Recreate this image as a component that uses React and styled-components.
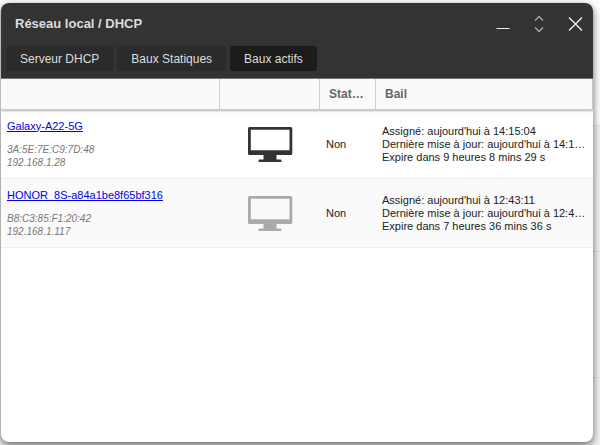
import React, { useState } from "react";
import styled, { createGlobalStyle } from "styled-components";

const GlobalStyle = createGlobalStyle`
    * {
        box-sizing: border-box;
    }

    body {
        margin: 0;
        font-family: "Liberation Sans", Arial, sans-serif;
        background: linear-gradient(#ffffff 125px, #f3f3f3 125px);
    }
`;

const Desktop = styled.div`
    display: flex;
    min-height: 100vh;
    padding: 3px 7px 3px 1px;
    background: repeating-linear-gradient(transparent 0 125px, #e2e2e2 125px 126px);
`;

const Window = styled.main`
    flex: 1;
    min-width: 0;
    overflow: hidden;
    border-radius: 8px;
    background: #ffffff;
    box-shadow: 0 3px 8px rgba(0, 0, 0, 0.6);
`;

const Header = styled.header`
    height: 76px;
    background: #333333;
    border-bottom: 1px solid #777777;
`;

const TitleBar = styled.div`
    display: flex;
    align-items: center;
    justify-content: space-between;
    height: 43px;
    padding: 0 8px 2px 14px;
`;

const Title = styled.h1`
    margin: 0;
    color: #dddddd;
    font-size: 13px;
    font-weight: bold;
`;

const Controls = styled.div`
    display: flex;
    gap: 16px;
`;

const ControlButton = styled.button`
    display: flex;
    padding: 0;
    border: 0;
    background: none;
    color: ${props => props.$muted ? "#aaaaaa" : "#eeeeee"};
`;

const Tabs = styled.nav`
    display: flex;
    gap: 4px;
    padding: 0 5px;
`;

const Tab = styled.button`
    height: 25px;
    padding: 0 14px;
    border: 0;
    border-radius: 3px;
    background: ${props => props.$active ? "#1c1c1c" : "#2b2b2b"};
    color: #dddddd;
    font-family: inherit;
    font-size: 12px;
`;

const LeaseTable = styled.table`
    width: 100%;
    table-layout: fixed;
    border-collapse: separate;
    border-spacing: 0;
    font-size: 11px;
    line-height: 13px;
`;

const TableHead = styled.thead`
    position: relative;
    box-shadow: 0 1px 2px rgba(0, 0, 0, 0.3);
`;

const HeadCell = styled.th`
    width: ${props => props.$width};
    height: 31px;
    padding: 0 9px;
    overflow: hidden;
    border-right: 1px solid #cccccc;
    border-bottom: 1px solid #cccccc;
    background: #fafafa;
    color: #666666;
    font-size: 12px;
    text-align: left;
    text-overflow: ellipsis;
    white-space: nowrap;
`;

const Row = styled.tr`
    background: ${props => props.$shaded ? "#fafafa" : "#ffffff"};
`;

const Cell = styled.td`
    height: 69px;
    padding: 4px 6px;
    border-bottom: 1px solid #eeeeee;
    color: #222222;
    text-align: ${props => props.$center ? "center" : "left"};
    vertical-align: middle;
`;

const HostLink = styled.a`
    color: #0000ee;
`;

const Address = styled.div`
    margin-top: 10px;
    color: #777777;
    font-size: 10px;
    font-style: italic;
`;

const Line = styled.div`
    overflow: hidden;
    text-overflow: ellipsis;
    white-space: nowrap;
`;

const ComputerIcon = styled.svg`
    display: block;
    margin: 0 auto;
    color: ${props => props.$online ? "#333333" : "#aaaaaa"};
`;

const TABS = ["Serveur DHCP", "Baux Statiques", "Baux actifs"];

const LEASES = [
    {
        name: "Galaxy-A22-5G",
        mac: "3A:5E:7E:C9:7D:48",
        ip: "192.168.1.28",
        online: true,
        isStatic: "Non",
        lease: [
            "Assigné: aujourd'hui à 14:15:04",
            "Dernière mise à jour: aujourd'hui à 14:15:04",
            "Expire dans 9 heures 8 mins 29 s",
        ],
    },
    {
        name: "HONOR_8S-a84a1be8f65bf316",
        mac: "B8:C3:85:F1:20:42",
        ip: "192.168.1.117",
        online: false,
        isStatic: "Non",
        lease: [
            "Assigné: aujourd'hui à 12:43:11",
            "Dernière mise à jour: aujourd'hui à 12:43:11",
            "Expire dans 7 heures 36 mins 36 s",
        ],
    },
];

const Computer = ({ online }) => (
    <ComputerIcon $online={online} width="46" height="36" viewBox="0 0 46 36" fill="currentColor" aria-hidden="true">
        <path fillRule="evenodd" d="M2.5 1h41.300a1.500 1.500 0 0 1 1.500 1.500v25a1.500 1.500 0 0 1-1.500 1.500H29.500V33.500H33.200A1.200 1.200 0 0 1 34.500 34.700V36H11.500V34.700A1.200 1.200 0 0 1 12.800 33.500H16.500V29H2.500A1.500 1.500 0 0 1 1 27.500V2.500A1.500 1.500 0 0 1 2.500 1zM3.800 3.800V24.300H42.500V3.800z" />
    </ComputerIcon>
);

const App = () => {
    const [activeTab, setActiveTab] = useState("Baux actifs");

    return (
        <>
            <GlobalStyle />
            <Desktop>
                <Window>
                    <Header>
                        <TitleBar>
                            <Title>Réseau local / DHCP</Title>
                            <Controls>
                                <ControlButton aria-label="Réduire">
                                    <svg width="20" height="20" viewBox="0 0 20 20" stroke="currentColor">
                                        <path d="M3.500 14.500h13" />
                                    </svg>
                                </ControlButton>
                                <ControlButton aria-label="Agrandir" $muted>
                                    <svg width="20" height="20" viewBox="0 0 20 20" fill="none" stroke="currentColor" strokeWidth="1.4">
                                        <path d="M6 6.500l4-4 4 4M6 13.500l4 4 4-4" />
                                    </svg>
                                </ControlButton>
                                <ControlButton aria-label="Fermer">
                                    <svg width="20" height="20" viewBox="0 0 20 20" stroke="currentColor" strokeWidth="1.4">
                                        <path d="M4 3.500l13 13M17 3.500l-13 13" />
                                    </svg>
                                </ControlButton>
                            </Controls>
                        </TitleBar>
                        <Tabs>
                            {TABS.map(tab => (
                                <Tab key={tab} $active={tab === activeTab} onClick={() => setActiveTab(tab)}>
                                    {tab}
                                </Tab>
                            ))}
                        </Tabs>
                    </Header>
                    <LeaseTable>
                        <TableHead>
                            <tr>
                                <HeadCell $width="37%" />
                                <HeadCell $width="100px" />
                                <HeadCell $width="56px">Statique</HeadCell>
                                <HeadCell>Bail</HeadCell>
                            </tr>
                        </TableHead>
                        <tbody>
                            {LEASES.map((lease, index) => (
                                <Row key={lease.mac} $shaded={index % 2 === 1}>
                                    <Cell>
                                        <HostLink href="#!">{lease.name}</HostLink>
                                        <Address>
                                            {lease.mac}<br />
                                            {lease.ip}
                                        </Address>
                                    </Cell>
                                    <Cell $center>
                                        <Computer online={lease.online} />
                                    </Cell>
                                    <Cell>{lease.isStatic}</Cell>
                                    <Cell>
                                        {lease.lease.map(line => <Line key={line}>{line}</Line>)}
                                    </Cell>
                                </Row>
                            ))}
                        </tbody>
                    </LeaseTable>
                </Window>
            </Desktop>
        </>
    );
}

export default App;
